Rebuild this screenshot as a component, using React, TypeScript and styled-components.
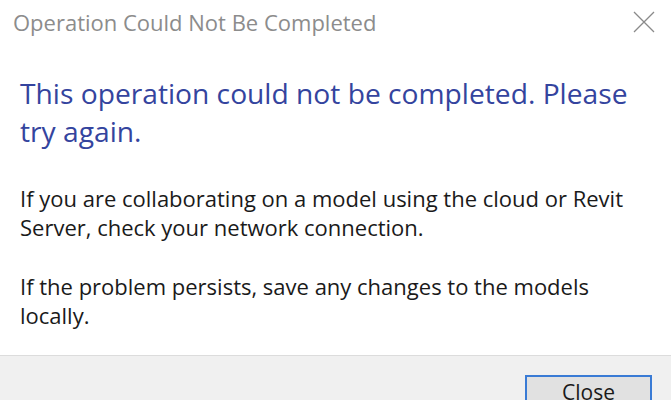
import React from "react";
import styled, { createGlobalStyle } from "styled-components";

const Global = createGlobalStyle`
  html, body { margin: 0; padding: 0; background: #ffffff; }
  body { width: 671px; height: 400px; overflow: hidden; }
  #root { height: 400px; }
`;

const Dialog = styled.div`
  width: 671px;
  height: 400px;
  display: flex;
  flex-direction: column;
  background: #ffffff;
  font-family: "Segoe UI", "Open Sans", "Noto Sans", sans-serif;
  overflow: hidden;
`;

const TitleBar = styled.div`
  height: 44px;
  display: flex;
  align-items: center;
  justify-content: space-between;
  padding: 0 14px 0 13px;
  flex-shrink: 0;
`;

const Title = styled.div`
  font-size: 22px;
  line-height: 28px;
  color: #8c8c8c;
`;

const CloseX = styled.button`
  width: 26px;
  height: 26px;
  border: none;
  background: transparent;
  padding: 0;
  display: flex;
  align-items: center;
  justify-content: center;
`;

const Content = styled.div`
  flex: 1;
  padding: 30px 20px 0 20px;
  display: flex;
  flex-direction: column;
`;

const Heading = styled.div`
  font-size: 28.2px;
  line-height: 38px;
  color: #34449e;
  width: 640px;
`;

const Body = styled.p<{ $top: number }>`
  margin: ${(p) => p.$top}px 0 0 0;
  font-size: 22px;
  line-height: 29px;
  color: #1a1a1a;
  width: 620px;
`;

const Footer = styled.div`
  height: 45px;
  flex-shrink: 0;
  background: #f0f0f0;
  border-top: 1px solid #dcdcdc;
  display: flex;
  justify-content: flex-end;
  align-items: flex-start;
  padding: 19px 19px 0 0;
  box-sizing: border-box;
  overflow: hidden;
`;

const Button = styled.button`
  width: 127px;
  height: 34px;
  flex-shrink: 0;
  background: #e1e1e1;
  border: 2px solid #3a7bd5;
  box-sizing: border-box;
  font-family: "Segoe UI", "Open Sans", "Noto Sans", sans-serif;
  font-size: 21px;
  line-height: 26px;
  color: #1a1a1a;
  padding: 2px 0 0 0;
  display: flex;
  justify-content: center;
  align-items: flex-start;
`;

export default function App() {
  return (
    <>
      <Global />
      <Dialog>
        <TitleBar>
          <Title>Operation Could Not Be Completed</Title>
          <CloseX aria-label="Close">
            <svg width="22" height="22" viewBox="0 0 22 22">
              <path d="M1 1 L21 21 M21 1 L1 21" stroke="#8a8a8a" strokeWidth="1.3" fill="none" />
            </svg>
          </CloseX>
        </TitleBar>
        <Content>
          <Heading>This operation could not be completed. Please try again.</Heading>
          <Body $top={34}>
            If you are collaborating on a model using the cloud or Revit Server, check your network connection.
          </Body>
          <Body $top={30}>
            If the problem persists, save any changes to the models locally.
          </Body>
        </Content>
        <Footer>
          <Button>Close</Button>
        </Footer>
      </Dialog>
    </>
  );
}
